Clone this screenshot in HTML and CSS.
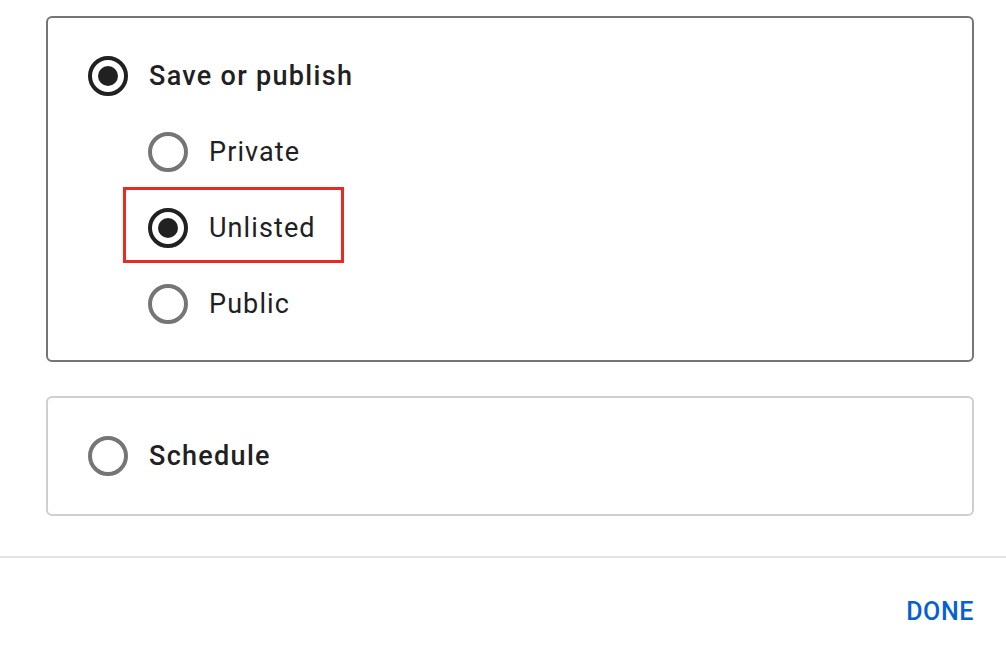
FILE: index.html
```html
<!DOCTYPE html>
<html>
<head>
<meta charset="utf-8">
<link rel="stylesheet" href="styles.css">
</head>
<body>
<div class="page">
  <div class="card card-active">
    <div class="row">
      <span class="radio radio-on"></span>
      <span class="label label-main">Save or publish</span>
    </div>
    <div class="sub">
      <div class="row">
        <span class="radio"></span>
        <span class="label">Private</span>
      </div>
      <div class="row">
        <span class="radio radio-on"></span>
        <span class="label">Unlisted</span>
        <span class="highlight"></span>
      </div>
      <div class="row">
        <span class="radio"></span>
        <span class="label">Public</span>
      </div>
    </div>
  </div>
  <div class="card card-idle">
    <div class="row">
      <span class="radio"></span>
      <span class="label label-main">Schedule</span>
    </div>
  </div>
</div>
<div class="footer">
  <span class="done">DONE</span>
</div>
</body>
</html>
```
FILE: styles.css
```css
* { box-sizing: border-box; }
html, body { margin: 0; padding: 0; background: #fff; }
body {
  font-family: Roboto, "Liberation Sans", sans-serif;
  color: #212121;
  width: 1006px;
  height: 650px;
  overflow: hidden;
}
.page {
  padding: 16px 32px 0 46px;
  display: flex;
  flex-direction: column;
  gap: 34px;
}
.card {
  border-radius: 6px;
  width: 928px;
}
.card-active { border: 2px solid #757575; padding: 20px 40px 18px; }
.card-idle { border: 2px solid #cfcfcf; padding: 20px 40px; }
.sub { padding-left: 60px; }
.row {
  position: relative;
  height: 76px;
  display: flex;
  align-items: center;
}
.radio {
  width: 40px;
  height: 40px;
  border-radius: 50%;
  border: 4px solid #757575;
  flex: none;
  display: flex;
  align-items: center;
  justify-content: center;
}
.radio-on { border-color: #212121; }
.radio-on::after {
  content: "";
  width: 20px;
  height: 20px;
  border-radius: 50%;
  background: #212121;
}
.label {
  margin-left: 21px;
  font-size: 27px;
  font-weight: 400;
  letter-spacing: 1.1px;
}
.label-main { font-weight: 500; letter-spacing: 1.3px; }
.highlight {
  position: absolute;
  left: -25px;
  top: -3px;
  width: 221px;
  height: 76px;
  border: 3px solid #ea2a22;
}
.footer {
  margin-top: 40px;
  border-top: 2px solid #e3e3e3;
  display: flex;
  justify-content: flex-end;
  padding: 39px 32px 0 0;
}
.done {
  color: #065fd4;
  font-size: 25px;
  font-weight: 500;
  letter-spacing: 0.6px;
}
```
